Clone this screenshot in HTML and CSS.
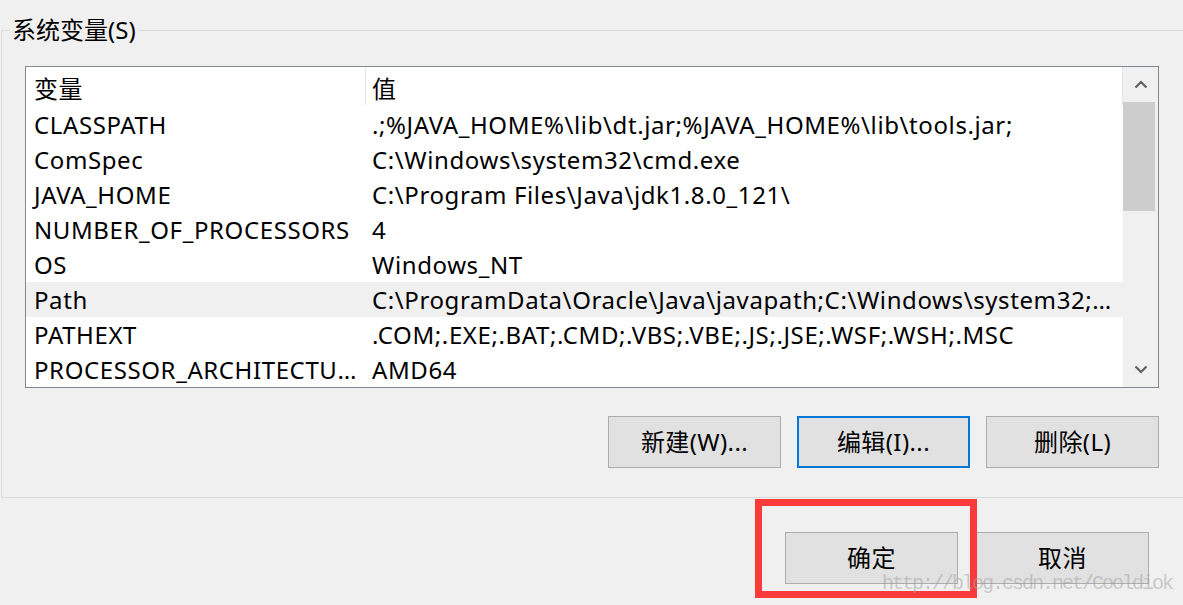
FILE: index.html
```html
<!DOCTYPE html>
<html lang="zh-CN">
<head>
<meta charset="utf-8">
<title>系统变量</title>
<link rel="stylesheet" href="styles.css">
</head>
<body>
<div class="group">
  <div class="group-title">系统变量(S)</div>
  <div class="listbox">
    <div class="list">
      <div class="row header">
        <div class="c1">变量</div>
        <div class="c2">值</div>
      </div>
      <div class="row"><div class="c1">CLASSPATH</div><div class="c2">.;%JAVA_HOME%\lib\dt.jar;%JAVA_HOME%\lib\tools.jar;</div></div>
      <div class="row"><div class="c1">ComSpec</div><div class="c2">C:\Windows\system32\cmd.exe</div></div>
      <div class="row"><div class="c1">JAVA_HOME</div><div class="c2">C:\Program Files\Java\jdk1.8.0_121\</div></div>
      <div class="row"><div class="c1">NUMBER_OF_PROCESSORS</div><div class="c2">4</div></div>
      <div class="row"><div class="c1">OS</div><div class="c2">Windows_NT</div></div>
      <div class="row selected"><div class="c1">Path</div><div class="c2">C:\ProgramData\Oracle\Java\javapath;C:\Windows\system32;C:\Windows;C:\Windows\System32\Wbem</div></div>
      <div class="row"><div class="c1">PATHEXT</div><div class="c2">.COM;.EXE;.BAT;.CMD;.VBS;.VBE;.JS;.JSE;.WSF;.WSH;.MSC</div></div>
      <div class="row"><div class="c1">PROCESSOR_ARCHITECTURE</div><div class="c2">AMD64</div></div>
    </div>
    <div class="scrollbar">
      <div class="sb-btn">
        <svg width="14" height="9" viewBox="0 0 14 9"><path d="M1.5 7.5 L7 2 L12.5 7.5" fill="none" stroke="#606060" stroke-width="2.2"/></svg>
      </div>
      <div class="sb-track">
        <div class="sb-thumb"></div>
      </div>
      <div class="sb-btn">
        <svg width="14" height="9" viewBox="0 0 14 9"><path d="M1.5 1.5 L7 7 L12.5 1.5" fill="none" stroke="#606060" stroke-width="2.2"/></svg>
      </div>
    </div>
  </div>
  <div class="btn-row">
    <button class="btn">新建(W)...</button>
    <button class="btn focused">编辑(I)...</button>
    <button class="btn">删除(L)</button>
  </div>
</div>
<div class="footer">
  <button class="btn">确定</button>
  <button class="btn">取消</button>
</div>
<div class="highlight-box"></div>
<div class="watermark">http://blog.csdn.net/Cooldiok</div>
</body>
</html>
```
FILE: styles.css
```css
html, body {
  margin: 0;
  padding: 0;
}
body {
  width: 1183px;
  height: 605px;
  overflow: hidden;
  background: #f0f0f0;
  color: #000;
  font-family: "Segoe UI", "Noto Sans", "Noto Sans CJK SC", sans-serif;
  font-size: 24px;
  position: relative;
}
.group {
  margin: 30px 0 0 1px;
  width: 1200px;
  height: 466px;
  border: 1px solid #dcdcdc;
  border-right: none;
}
.group-title {
  width: fit-content;
  margin: -18px 0 0 8px;
  padding: 0 2px;
  background: #f0f0f0;
  line-height: 34px;
  height: 34px;
}
.listbox {
  margin: 19px 0 0 23px;
  width: 1132px;
  height: 320px;
  border: 1px solid #828790;
  background: #fff;
  display: flex;
}
.list {
  width: 1097px;
  overflow: hidden;
  display: flex;
  flex-direction: column;
  letter-spacing: 0.6px;
}
.row {
  display: flex;
  height: 35px;
  line-height: 36px;
  flex: none;
  white-space: nowrap;
}
.row.header {
  height: 40px;
}
.row.header .c1,
.row.header .c2 {
  border-right: 1px solid #e5e5e5;
  height: 38px;
  line-height: 44px;
}
.row.selected {
  background: #f0f0f0;
}
.c1 {
  width: 340px;
  box-sizing: border-box;
  padding: 0 4px 0 8px;
  overflow: hidden;
  text-overflow: ellipsis;
}
.c2 {
  flex: 1;
  min-width: 0;
  padding: 0 8px 0 6px;
  overflow: hidden;
  text-overflow: ellipsis;
}
.scrollbar {
  width: 35px;
  background: #f0f0f0;
  display: flex;
  flex-direction: column;
  margin-left: auto;
}
.sb-btn {
  height: 35px;
  display: flex;
  align-items: center;
  justify-content: center;
  flex: none;
}
.sb-track {
  flex: 1;
}
.sb-thumb {
  height: 109px;
  margin-right: 3px;
  background: #cdcdcd;
}
.btn-row {
  margin: 28px 0 0 23px;
  width: 1134px;
  display: flex;
  justify-content: flex-end;
  gap: 16px;
}
.btn {
  font: inherit;
  color: #000;
  width: 173px;
  height: 52px;
  border: 1px solid #adadad;
  background: #e1e1e1;
  padding: 0;
  margin: 0;
  line-height: 48px;
  letter-spacing: 0.4px;
}
.btn.focused {
  border: 2px solid #0078d7;
}
.footer {
  display: flex;
  justify-content: flex-end;
  gap: 18px;
  margin: 34px 34px 0 0;
}
.highlight-box {
  position: absolute;
  left: 755px;
  top: 499px;
  width: 208px;
  height: 85px;
  border: 7px solid #fb3a3b;
}
.watermark {
  position: absolute;
  left: 882px;
  top: 570px;
  font-family: "Liberation Mono", monospace;
  font-size: 20px;
  letter-spacing: -2px;
  color: rgba(160, 160, 160, 0.5);
  line-height: 28px;
}
```
